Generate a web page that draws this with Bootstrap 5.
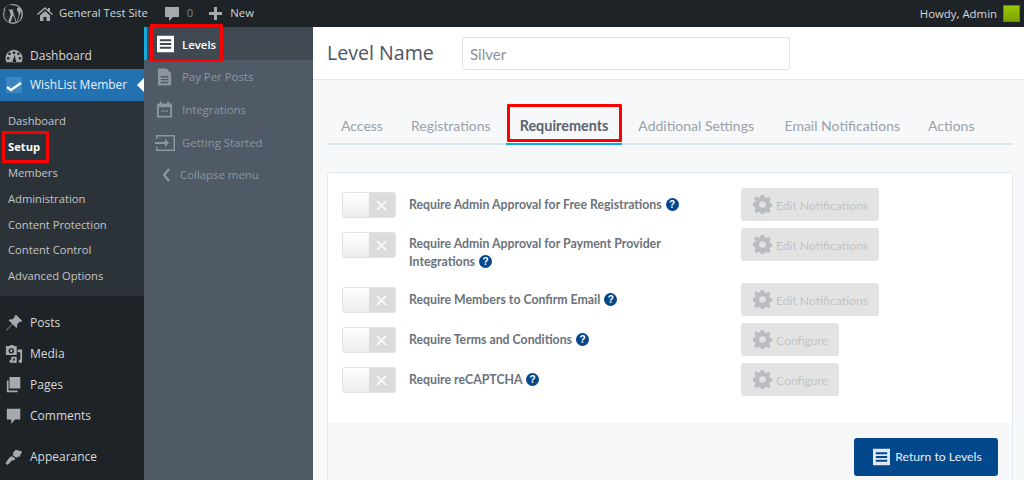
<!DOCTYPE html>
<html lang="en"><head><meta charset="utf-8"><title>Requirements</title>
<link href="https://cdn.jsdelivr.net/npm/bootstrap@5.3.0/dist/css/bootstrap.min.css" rel="stylesheet">
<style>
html,body{height:480px;overflow:hidden}
body{font-family:"Open Sans","Noto Sans",sans-serif;background:#f6f8fa;position:relative;width:1024px}
.topbar{height:27px;background:#1d2327;color:#d5d7d8;font-size:11.3px;padding-left:5px}
.topbar svg{fill:#a7aaad;display:block}
.wplogo{margin-left:-2px;margin-right:14px}
.homeic{margin-right:6px}
.top-dim{color:#7d8184}
.howdy{font-size:11.4px;margin-right:6px}
.shell{height:453px}
.wpmenu{width:144px;background:#1d2327;font-size:12px;padding-top:14px;flex:none}
.wpitem{height:31px;color:#d7d9da;padding-left:5px;gap:7px}
.wpitem.first{height:28px;padding-top:1px}
.wpitem svg{width:18px;height:18px;fill:#a7aaad;flex:none}
.wpitem.now{background:#2271b1;color:#e8f0f6;height:32px;position:relative}
.wpitem.now:after{content:"";position:absolute;right:0;top:9px;border:7px solid transparent;border-right-color:#fff;border-left:0}
.wl-ic{width:16px;height:16px;background:#3a86c1;margin-left:1px;margin-right:1px;flex:none}
.wl-ic svg{width:16px;height:16px;fill:none;stroke:#fff;stroke-width:2.4}
.wpsub{background:#2c3338;padding:7px 0 7px 8px;font-size:11.2px;color:#c3c5c7;height:195px}
.wpsub div{height:25.9px;line-height:25.9px}
.wpsub .act{color:#fff;font-weight:700}
.gap-a{height:11px}
.gap-b{height:10px}
.levelnav{width:169px;background:#4f5a66;font-size:11.4px;color:#8d95a0;flex:none}
.lv{height:33px;padding-left:12px;gap:9px}
.lv svg{width:17px;height:18px;flex:none;fill:#8d95a0}
.lv.on{background:#404852;color:#fff;border-left:3px solid #16a9dc;padding-left:10px;font-weight:600;gap:8px}
.lv.on span{padding-top:2px}
.lv.on svg{fill:#fff}
.main{flex:1;min-width:0;font-family:"Noto Sans","Open Sans",sans-serif}
.lvhead{height:53px;background:#fff;border-bottom:1px solid #e3e8ee;padding-left:14px}
.lvhead h1{font-size:19.6px;font-weight:500;color:#4d5560;width:135px;margin:0;font-family:"Open Sans",sans-serif}
.lvname{width:328px;height:33px;border:1px solid #dfe3e8;border-radius:2px;padding:2px 7px 0;font-size:15px;color:#8a929b;background:#fff;font-family:"Lato",sans-serif}
.tabsrow{margin:0 11px 0 14px;padding-top:35px;height:65px;border-bottom:2px solid #dce6ef;font-family:"Lato",sans-serif;font-size:14px;color:#9ba1a8}
.tabi{padding:0 14px;height:29px;line-height:21px}
.tabi.on{color:#5a626c;font-weight:700;font-size:14.4px;border-bottom:2px solid #16a9dc;height:30px;margin:0 2px 0 1px}
.tabi.on + .tabi{margin-right:2.5px}
.panel{margin:27px 11px 0 14px;border:1px solid #dfe7f0;border-bottom:0;border-radius:4px 4px 0 0;background:#f6f8fa;height:308px}
.pbody{background:#fff;height:250px;padding:15px 15px 0 14px}
.rq{font-family:"Lato",sans-serif;font-size:12.3px;font-weight:700;color:#6b727b}
.rqrow{margin-bottom:7px}
.rqrow.tall{margin-bottom:12px}
.sw{width:54px;height:26px;background:#dcdcdc;border:1px solid #e2e2e2;border-radius:3px;position:relative;flex:none;margin-right:13px}
.sw:before{content:"";display:block;width:26px;height:24px;background:linear-gradient(#fff,#ececec);border-radius:2px 0 0 2px}
.sw svg{position:absolute;left:33px;top:7px;width:11px;height:11px;stroke:#fff;stroke-width:1.6}
.rqtext{width:332px;flex:none;line-height:18px;padding-top:1px}
.tall .rqtext{padding-top:7px}
.qm{display:inline-block;width:13px;height:13px;border-radius:50%;background:#03478d;color:#fff;font:700 10px/13px "Liberation Sans",sans-serif;text-align:center;margin-left:1px;vertical-align:1px}
.gbtn{height:33px;background:#e3e3e3;border:0;border-radius:3px;color:#c0c3c7;font-size:12.1px;padding:3px 11px 0 12px;gap:4px;font-family:"Lato",sans-serif}
.gbtn svg{width:19px;height:19px;fill:#b9bcc0;flex:none;margin-top:-3px}
.pfoot{padding:15px 14px 0 0}
.rbtn{width:144px;height:38px;background:#03478d;color:#e8eef5;border:0;border-radius:3px;font-size:12.2px;font-family:"Lato",sans-serif;gap:5px;padding:0 0 0 3px}
.rbtn svg{width:17px;height:18px}
.redbox{position:absolute;border:3px solid #f00;border-radius:1px;pointer-events:none}
.r-lv{left:150px;top:24px;width:73px;height:38px}
.r-set{left:2px;top:131px;width:47px;height:32px}
.r-req{left:507px;top:104px;width:115px;height:38px}
</style></head><body>
<svg width="0" height="0" class="d-block position-absolute"><defs>
<symbol id="gear" viewBox="0 0 20 20"><path fill-rule="evenodd" d="M8.200 0h3.600l.5 2.800 1.600.7 2.300-1.600 2.500 2.500-1.600 2.300.7 1.600 2.800.5v3.600l-2.800.5-.7 1.600 1.600 2.300-2.500 2.500-2.300-1.600-1.600.7-.5 2.800H8.200l-.5-2.800-1.600-.7-2.300 1.600-2.500-2.500 1.600-2.300-.7-1.600L-.7 11.800V8.200l2.800-.5.700-1.600L1.200 3.800 3.700 1.300 6 2.900l1.600-.7zM10 6.500a3.500 3.500 0 1 0 0 7 3.500 3.500 0 0 0 0-7z"/></symbol>
<symbol id="lines" viewBox="0 0 18 18"><path fill-rule="evenodd" d="M0 0h18v18H0zM3 4v2h12V4zM3 8v2h12V8zM3 12v2h12v-2z"/></symbol>
<symbol id="xm" viewBox="0 0 11 11"><path d="M1 1l9 9M10 1l-9 9" fill="none"/></symbol>
</defs></svg>

<div class="topbar d-flex align-items-center">
  <svg width="20" height="20" viewBox="0 0 20 20" class="wplogo"><path fill-rule="evenodd" d="M10 0a10 10 0 1 0 0 20 10 10 0 0 0 0-20zm0 1.200a8.800 8.800 0 0 1 6 2.300c-1.200-.1-2 .9-2 1.900 0 1 .6 1.700 1.100 2.600.4.700.6 1.500.6 2.700 0 1-.4 2.200-.9 3.800l-1.100 3.800-4.100-12.100.9-.1c.5-.1.400-.7 0-.7l-2.600.1-2.500-.1c-.5 0-.5.700-.1.700l.9.100 1.500 4.200-2.200 6.500-3.700-10.700.9-.1c.5-.1.400-.7 0-.7l-2.400.1A8.800 8.800 0 0 1 10 1.200zM1.900 6.500l4.400 11.900A8.800 8.800 0 0 1 1.200 10c0-1.200.3-2.400.7-3.500zm8.200 4.300l2.600 7.300a8.800 8.800 0 0 1-5.100.1zm7.200-4.300a8.800 8.800 0 0 1-3 11.700l2.500-7.400c.5-1.100.6-2 .6-2.800 0-.5 0-1-.1-1.500z"/></svg>
  <svg width="16" height="16" viewBox="0 0 16 16" class="homeic"><path d="M8 1l3 2.700V2h2v3.500L16 8l-1 1.100L8 3 1 9.100 0 8zM3 9.500 8 5l5 4.500V15H9.500v-4h-3v4H3z"/></svg>
  <span class="me-3">General Test Site</span>
  <svg width="15" height="16" viewBox="0 0 15 16" class="me-2"><path d="M0 1h14v10H8l-4 4v-4H0z" transform="translate(1 0)"/></svg>
  <span class="top-dim me-3">0</span>
  <svg width="13" height="13" viewBox="0 0 13 13" class="me-2"><path d="M5 0h3v5h5v3H8v5H5V8H0V5h5z"/></svg>
  <span>New</span>
  <span class="ms-auto howdy">Howdy, Admin</span>
  <span class="d-block me-1" style="width:17px;height:17px;border:1px solid #6f7a5a;background:linear-gradient(#98c800,#7ea300)"></span>
</div>

<div class="shell d-flex">
  <nav class="wpmenu">
    <div class="wpitem first d-flex align-items-center"><svg viewBox="0 0 20 20"><path fill-rule="evenodd" d="M10 3a9.500 9.500 0 0 0-9.500 9.500c0 1.700.5 3.200 1.200 4.500h16.600c.7-1.300 1.200-2.800 1.200-4.500A9.500 9.500 0 0 0 10 3zM5 6a1.500 1.500 0 1 1 0 3 1.500 1.500 0 0 1 0-3zm5-1a1.500 1.500 0 1 1 0 3 1.500 1.500 0 0 1 0-3zm5 1a1.500 1.500 0 1 1 0 3 1.500 1.500 0 0 1 0-3zM3.500 11a1.500 1.500 0 1 1 0 3 1.500 1.500 0 0 1 0-3zm13 0a1.500 1.500 0 1 1 0 3 1.500 1.500 0 0 1 0-3zM11 9l.6 4.700a2 2 0 1 1-2.700.6z"/></svg><span>Dashboard</span></div>
    <div class="wpitem now d-flex align-items-center"><span class="wl-ic d-block"><svg viewBox="0 0 16 16"><path d="M1 8l4 3 10-7"/></svg></span><span>WishList Member</span></div>
    <div class="wpsub">
      <div>Dashboard</div><div class="act">Setup</div><div>Members</div><div>Administration</div><div>Content Protection</div><div>Content Control</div><div>Advanced Options</div>
    </div>
    <div class="gap-a"></div>
    <div class="wpitem d-flex align-items-center"><svg viewBox="0 0 20 20"><path d="M12.500 1l6.500 6.500-1.300 1.300-1.200-.4-3 3c.4 1.500.1 3-.8 4.100L8.500 11.300 2 18l-1 .5.500-1L8 11 3.900 6.800c1.100-.9 2.600-1.200 4.100-.8l3-3-.4-1.200z"/></svg><span>Posts</span></div>
    <div class="wpitem d-flex align-items-center"><svg viewBox="0 0 20 20"><path fill-rule="evenodd" d="M1 1h4l1-1h3l1 1h3v10H1zm6 2.500a3 3 0 1 0 0 6 3 3 0 0 0 0-6zM7 5a1.500 1.500 0 1 1 0 3 1.500 1.500 0 0 1 0-3zM14 5h5v13a2 2 0 1 1-2-2V8h-3zM7 13h6v6a2 2 0 1 1-2-2v-2H9v3a2 2 0 1 1-2-2z"/></svg><span>Media</span></div>
    <div class="wpitem d-flex align-items-center"><svg viewBox="0 0 20 20"><path d="M5 1h12v13H5zM2 5h2v11h10v2H2z"/></svg><span>Pages</span></div>
    <div class="wpitem d-flex align-items-center"><svg viewBox="0 0 20 20"><path d="M2 2h15v12h-6l-4 5v-5H2z"/></svg><span>Comments</span></div>
    <div class="gap-b"></div>
    <div class="wpitem d-flex align-items-center"><svg viewBox="0 0 20 20"><path d="M12 2l7 2-3 6-2-.5-1 1.500-4.500-3 1-1.500-1-1zM7.500 9l4 3-1.500 2-2-.5L3 19l-2.500-2 4-6z"/></svg><span>Appearance</span></div>
  </nav>

  <div class="levelnav">
    <div class="lv on d-flex align-items-center"><svg viewBox="0 0 18 18"><use href="#lines"/></svg><span>Levels</span></div>
    <div class="lv d-flex align-items-center"><svg viewBox="0 0 18 18"><path fill-rule="evenodd" d="M2 0h9l5 5v13H2zM5 8v1.500h8V8zm0 3v1.500h8V11zm0 3v1.500h8V14z"/></svg><span>Pay Per Posts</span></div>
    <div class="lv d-flex align-items-center"><svg viewBox="0 0 18 18"><path fill-rule="evenodd" d="M1 2h3V0h2v2h6V0h2v2h3v15H1zm2 4v9h12V6zm3 3.500h1.500V11H6zm2.500 0H10V11H8.500zm2.500 0h1.500V11H11z"/></svg><span>Integrations</span></div>
    <div class="lv d-flex align-items-center" style="padding-left:11px;gap:7px"><svg viewBox="0 0 20 18" style="width:20px"><path fill-rule="evenodd" d="M1 1h19v16H1v-4h1.500v2.500h16v-13h-16V5H1zM0 8h10V5l4 4-4 4v-3H0z"/></svg><span>Getting Started</span></div>
    <div class="lv d-flex align-items-center" style="height:32px;padding-left:18px;gap:10px"><svg viewBox="0 0 8 14" style="width:8px;height:14px"><path d="M7 1 2 7l5 6" fill="none" stroke="#8d95a0" stroke-width="2.200"/></svg><span>Collapse menu</span></div>
  </div>

  <main class="main">
    <div class="lvhead d-flex align-items-center">
      <h1>Level Name</h1>
      <div class="lvname d-flex align-items-center">Silver</div>
    </div>
    <div class="tabsrow d-flex align-items-start">
      <div class="tabi">Access</div><div class="tabi">Registrations</div><div class="tabi on">Requirements</div><div class="tabi">Additional Settings</div><div class="tabi">Email Notifications</div><div class="tabi">Actions</div>
    </div>
    <div class="panel">
      <div class="pbody rq">
        <div class="rqrow d-flex align-items-center"><div class="sw"><svg><use href="#xm"/></svg></div><div class="rqtext">Require Admin Approval for Free Registrations <span class="qm">?</span></div><button class="gbtn d-flex align-items-center"><svg><use href="#gear"/></svg>Edit Notifications</button></div>
        <div class="rqrow tall d-flex align-items-start"><div class="sw mt-1"><svg><use href="#xm"/></svg></div><div class="rqtext"><div>Require Admin Approval for Payment Provider</div><div>Integrations <span class="qm">?</span></div></div><button class="gbtn d-flex align-items-center"><svg><use href="#gear"/></svg>Edit Notifications</button></div>
        <div class="rqrow d-flex align-items-center"><div class="sw"><svg><use href="#xm"/></svg></div><div class="rqtext">Require Members to Confirm Email <span class="qm">?</span></div><button class="gbtn d-flex align-items-center"><svg><use href="#gear"/></svg>Edit Notifications</button></div>
        <div class="rqrow d-flex align-items-center"><div class="sw"><svg><use href="#xm"/></svg></div><div class="rqtext">Require Terms and Conditions <span class="qm">?</span></div><button class="gbtn d-flex align-items-center"><svg><use href="#gear"/></svg>Configure</button></div>
        <div class="rqrow d-flex align-items-center"><div class="sw"><svg><use href="#xm"/></svg></div><div class="rqtext">Require reCAPTCHA <span class="qm">?</span></div><button class="gbtn d-flex align-items-center"><svg><use href="#gear"/></svg>Configure</button></div>
      </div>
      <div class="pfoot d-flex justify-content-end">
        <button class="rbtn d-flex align-items-center justify-content-center"><svg viewBox="0 0 18 18" fill="#dfe7f1"><use href="#lines"/></svg>Return to Levels</button>
      </div>
    </div>
  </main>
</div>
<div class="redbox r-lv"></div><div class="redbox r-set"></div><div class="redbox r-req"></div>
<script src="https://cdn.jsdelivr.net/npm/bootstrap@5.3.0/dist/js/bootstrap.bundle.min.js"></script>
</body></html>
